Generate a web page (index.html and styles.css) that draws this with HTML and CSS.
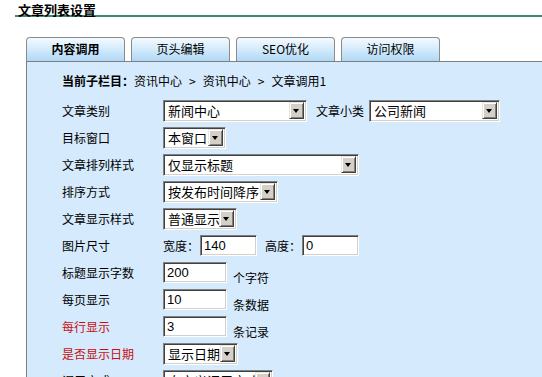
FILE: index.html
```html
<!DOCTYPE html>
<html lang="zh-CN">
<head>
    <meta charset="UTF-8">
    <meta name="viewport" content="width=device-width, initial-scale=1.0">
    <title>文章列表设置</title>
    <link rel="stylesheet" href="styles.css">
</head>
<body>
    <!-- Page title -->
    <div class="page-title">文章列表设置</div>

    <!-- Tabs -->
    <ul class="tabs">
        <li class="tab active">内容调用</li>
        <li class="tab">页头编辑</li>
        <li class="tab">SEO优化</li>
        <li class="tab">访问权限</li>
    </ul>

    <!-- Tab panel -->
    <div class="panel">
        <div class="crumb"><b>当前子栏目：</b>资讯中心<span class="sep">&gt;</span>资讯中心<span class="sep">&gt;</span>文章调用1</div>

        <div class="form-row">
            <span class="label">文章类别</span>
            <div class="select" style="width:144px"><span class="val">新闻中心</span><span class="arrow"></span></div>
            <span class="sub-label">文章小类</span>
            <div class="select" style="width:131px"><span class="val">公司新闻</span><span class="arrow"></span></div>
        </div>
        <div class="form-row">
            <span class="label">目标窗口</span>
            <div class="select" style="width:63px"><span class="val">本窗口</span><span class="arrow"></span></div>
        </div>
        <div class="form-row">
            <span class="label">文章排列样式</span>
            <div class="select" style="width:196px"><span class="val">仅显示标题</span><span class="arrow"></span></div>
        </div>
        <div class="form-row">
            <span class="label">排序方式</span>
            <div class="select" style="width:115px"><span class="val">按发布时间降序</span><span class="arrow"></span></div>
        </div>
        <div class="form-row">
            <span class="label">文章显示样式</span>
            <div class="select" style="width:74px"><span class="val">普通显示</span><span class="arrow"></span></div>
        </div>
        <div class="form-row">
            <span class="label">图片尺寸</span>
            <span class="size-label">宽度：</span>
            <input class="text-input small" type="text" value="140">
            <span class="size-label gap">高度：</span>
            <input class="text-input small" type="text" value="0">
        </div>
        <div class="form-row">
            <span class="label">标题显示字数</span>
            <input class="text-input" type="text" value="200">
            <span class="unit">个字符</span>
        </div>
        <div class="form-row">
            <span class="label">每页显示</span>
            <input class="text-input" type="text" value="10">
            <span class="unit">条数据</span>
        </div>
        <div class="form-row">
            <span class="label required">每行显示</span>
            <input class="text-input" type="text" value="3">
            <span class="unit">条记录</span>
        </div>
        <div class="form-row">
            <span class="label required">是否显示日期</span>
            <div class="select" style="width:75px"><span class="val">显示日期</span><span class="arrow"></span></div>
        </div>
        <div class="form-row">
            <span class="label">调用方式</span>
            <div class="select" style="width:110px"><span class="val">自定义调用方式</span><span class="arrow"></span></div>
        </div>
    </div>
</body>
</html>
```

FILE: styles.css
```css
html, body {
    overflow: hidden; /* screenshot only, no scrollbars */
}

body {
    margin: 0;
    background: #fff;
    font-family: "Noto Sans CJK SC", "Liberation Sans", sans-serif;
    font-size: 12px;
    color: #000;
}

* {
    box-sizing: border-box;
}

.page-title {
    margin-left: 15px;
    padding: 1px 0 0 3px;
    height: 17px;
    line-height: 17px;
    font-size: 13px;
    font-weight: 700;
    border-bottom: 2px solid #3f8a6c;
}

.tabs {
    list-style: none;
    margin: 20px 0 0 26px;
    padding: 0;
    display: flex;
    gap: 6px;
}

.tab {
    width: 99px;
    height: 24px;
    line-height: 22px;
    text-align: center;
    border: 1px solid #8c8c8c;
    border-bottom: none;
    border-radius: 4px 4px 0 0;
    background: linear-gradient(to bottom, #f4faff 0%, #d3eafb 50%, #afd8f5 100%);
}

.tab.active {
    font-weight: 700;
}

.panel {
    margin-left: 26px;
    height: 400px;
    padding: 9px 0 0 35px;
    background-color: #d5eafc;
    border-top: 1px solid #7f7f7f;
    border-left: 1px solid #7f7f7f;
}

.crumb {
    height: 20px;
    line-height: 20px;
    margin-bottom: 6px;
    white-space: nowrap;
}

.crumb .sep {
    margin: 0 7px;
}

.form-row {
    display: flex;
    align-items: center;
    height: 27px;
}

.form-row .label {
    width: 101px;
    flex-shrink: 0;
}

.form-row .label.required {
    color: #c80f0f;
}

.sub-label {
    margin: 0 5px 0 9px;
}

.size-label.gap {
    margin-left: 8px;
}

.unit {
    margin: 9px 0 0 6px;
}

/* windows classic style select */
.select {
    display: flex;
    align-items: center;
    justify-content: space-between;
    height: 22px;
    padding: 0 2px 0 3px;
    background: #fff;
    border: 1px solid;
    border-color: #808080 #fff #fff #808080;
    box-shadow: inset 1px 1px #404040, inset -1px -1px #d4d0c8;
    font-size: 13px;
    white-space: nowrap;
    overflow: hidden;
}

.select .val {
    padding-left: 1px;
    overflow: hidden;
}

.select .arrow {
    position: relative;
    flex-shrink: 0;
    width: 15px;
    height: 17px;
    background: #d4d0c8;
    border: 1px solid;
    border-color: #e8e6e1 #404040 #404040 #e8e6e1;
    box-shadow: inset 1px 1px #fff, inset -1px -1px #808080;
}

.select .arrow::after {
    content: "";
    position: absolute;
    left: 3px;
    top: 6px;
    border-left: 3.5px solid transparent;
    border-right: 3.5px solid transparent;
    border-top: 4px solid #000;
}

.text-input {
    width: 64px;
    height: 21px;
    padding: 0 3px;
    font-family: "Liberation Sans", sans-serif;
    font-size: 13px;
    color: #000;
    background: #fff;
    border: 1px solid;
    border-color: #808080 #fff #fff #808080;
    box-shadow: inset 1px 1px #404040, inset -1px -1px #d4d0c8;
    outline: none;
}

.text-input.small {
    width: 57px;
    margin-left: 1px;
}
```
